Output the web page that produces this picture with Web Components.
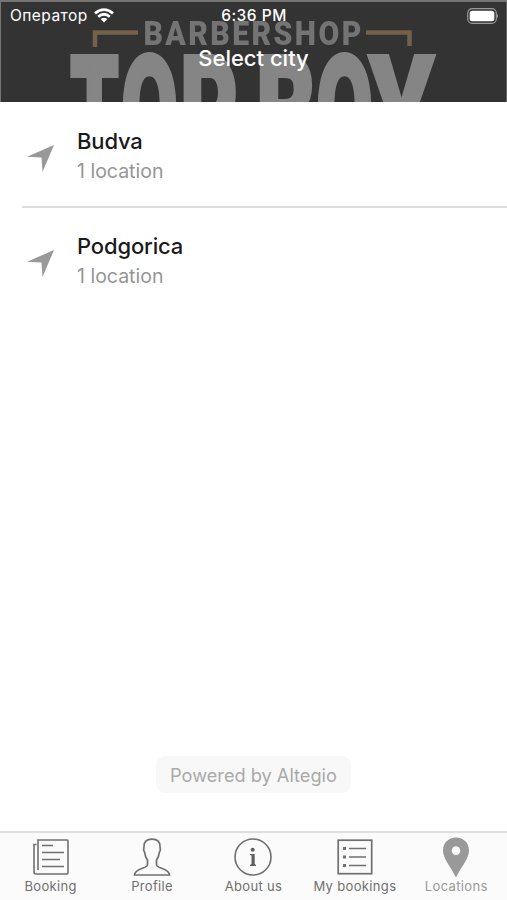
<!DOCTYPE html>
<html lang="en">
<head>
<meta charset="utf-8">
<title>Select city</title>
<style>
html,body{margin:0;height:100%;background:#fff}
body{font-family:Inter,"Liberation Sans",sans-serif}
</style>
</head>
<body>
<city-screen></city-screen>
<script>
const define = (name, html) => {
  const t = document.createElement('template');
  t.innerHTML = html;
  customElements.define(name, class extends HTMLElement {
    constructor() {
      super();
      this.attachShadow({mode: 'open'}).append(t.content.cloneNode(true));
    }
  });
};

define('brand-backdrop', `
<style>
:host{position:absolute;inset:0;overflow:hidden}
svg{display:block;filter:blur(.6px)}
</style>
<svg width="507" height="102" viewBox="0 0 507 102" font-family="Roboto,sans-serif">
  <g fill="none" stroke="#75604a" stroke-width="4.5">
    <path d="M95 47V32.500H138M366 32.500H409.500V46"/>
  </g>
  <text transform="translate(143.500 44.500) scale(.9 1)" font-size="33.500" font-weight="900" fill="#747474" textLength="242" lengthAdjust="spacing">BARBERSHOP</text>
  <g fill="#858585" stroke="#858585" stroke-width="4" stroke-linejoin="miter" font-size="150" font-weight="900">
    <text x="70" y="163" textLength="49" lengthAdjust="spacingAndGlyphs">T</text>
    <text x="121" y="163" textLength="57" lengthAdjust="spacingAndGlyphs">O</text>
    <text x="180" y="163" textLength="58" lengthAdjust="spacingAndGlyphs">P</text>
    <text x="256" y="163" textLength="60" lengthAdjust="spacingAndGlyphs">B</text>
    <text x="316" y="163" textLength="57" lengthAdjust="spacingAndGlyphs">O</text>
    <text x="369" y="163" textLength="65" lengthAdjust="spacingAndGlyphs">Y</text>
  </g>
</svg>`);

define('status-bar', `
<style>
:host{display:grid;grid-template-columns:1fr auto 1fr;align-items:center;height:30px;padding:0 9px 0 10px;color:#fff;font-size:15.500px;position:relative;letter-spacing:.45px;line-height:30px;box-sizing:border-box}
.left{display:flex;align-items:center;gap:6px}
.left span,.time{padding-top:1px}
.time{font-weight:500;letter-spacing:.5px}
.battery{justify-self:end;display:flex}
svg{display:block}
</style>
<div class="left"><span>Оператор</span>
<svg width="20" height="15" viewBox="0 0 20 15"><g fill="none" stroke="#fff" stroke-width="2.700"><path d="M1 5.400Q10-2.200 19 5.400M4.200 8.700Q10 3.800 15.800 8.700"/></g><path fill="#fff" d="M6.700 11Q10 8.300 13.300 11L10 14.500Z"/></svg></div>
<span class="time">6:36 PM</span>
<div class="battery"><svg width="33" height="16" viewBox="0 0 33 16"><rect x="2.700" y=".7" width="28.600" height="14.600" rx="4.500" fill="none" stroke="#999" stroke-width="1.200"/><rect x="4.700" y="2.700" width="24.600" height="10.600" rx="2.500" fill="#fff"/><path d="M32 5.500Q34 8 32 10.500Z" fill="#999"/></svg></div>`);

define('nav-header', `
<style>
:host{display:block;position:relative;height:102px;background:#333;box-shadow:inset 1px 2px 0 #747474,inset -1px 0 0 #666;flex:none}
h1{position:relative;margin:0;text-align:center;color:#fff;font-size:22px;font-weight:450;line-height:56px}
</style>
<brand-backdrop></brand-backdrop>
<status-bar></status-bar>
<h1><slot></slot></h1>`);

define('city-row', `
<style>
:host{display:flex;height:105px;box-sizing:border-box;padding:24px 0 0 27px;gap:23px}
svg{margin-top:19px;flex:none}
.name{font-size:22px;line-height:31px;color:#1b1b1b;font-weight:450;letter-spacing:-.15px}
.sub{font-size:19.500px;line-height:28px;color:#969696}
</style>
<svg width="27" height="27" viewBox="0 0 27 27"><path fill="#999" d="M27 0 15.500 27 14.500 12.500 0 11.800Z"/></svg>
<div><div class="name"><slot></slot></div><div class="sub"><slot name="sub"></slot></div></div>`);

define('powered-badge', `
<style>
:host{display:block;align-self:center;box-sizing:border-box;width:195px;height:37px;border-radius:9px;background:#f8f8f8;color:#a9a9a9;font-size:18.200px;line-height:38px;text-align:center;margin:auto 0 38px}
</style><slot></slot>`);

define('tab-item', `
<style>
:host{display:flex;flex-direction:column;align-items:center;color:#6f6f6f;font-size:13px;line-height:16px;letter-spacing:.35px;padding-top:3px;white-space:nowrap}
:host([active]){color:#999}
.icon{height:42px;display:flex;align-items:center}
</style>
<div class="icon"><slot name="icon"></slot></div><span><slot></slot></span>`);

define('tab-bar', `
<style>
:host{display:grid;grid-template-columns:repeat(5,1fr);height:69px;box-sizing:border-box;border-top:2px solid #dedede;background:#fbfbfb;flex:none}
svg{display:block}
</style>
<tab-item><svg slot="icon" width="36" height="36" viewBox="0 0 36 36" fill="none" stroke="#707070" stroke-width="1.600"><path d="M5 31V1H34Q35 1 35 2V33.500Q35 35 33 35H3Q1 35 1 33V5.500H3.500M9 6.500H20M9 13.500H31M9 20.500H27M9 27.500H31"/></svg>Booking</tab-item>
<tab-item><svg slot="icon" width="38" height="38" viewBox="0 0 38 38" fill="none" stroke="#707070" stroke-width="1.700"><path d="M19 1.200C13.500 1.200 11 4 11 8.500C10.200 11 10.700 13 11.800 15C12 18 13 20 14.500 22V27C14 31 2 29.500 1.500 37H36.500C36 29.500 24 31 23.500 27V22C25 20 26 18 26.200 15C27.300 13 27.800 11 27 8.500C27 4 24.500 1.200 19 1.200Z"/></svg>Profile</tab-item>
<tab-item><svg slot="icon" width="38" height="38" viewBox="0 0 38 38"><circle cx="19" cy="19" r="18" fill="none" stroke="#6f6f6f" stroke-width="1.600"/><circle cx="18.700" cy="11.700" r="2" fill="#606060"/><path fill="#606060" d="M16 16H20.700V26L22 27V28H16V27L17.500 26V17.500L16 17Z"/></svg>About us</tab-item>
<tab-item><svg slot="icon" width="36" height="36" viewBox="0 0 36 36" fill="none" stroke="#707070"><rect x="1.200" y="1.200" width="33.500" height="33.500" stroke-width="1.700"/><path stroke-width="1.600" d="M12 9.500H29M12 18H29M12 26.500H29"/><path stroke-width="2.800" d="M6 9.500H9M6 18H9M6 26.500H9"/></svg>My bookings</tab-item>
<tab-item active><svg slot="icon" width="28" height="41" viewBox="0 0 28 41"><path fill="#999" fill-rule="evenodd" d="M14 .5C6.300.500 1 6 1 13.500C1 22 9 30 14 40.500C19 30 27 22 27 13.500C27 6 21.700.500 14 .5ZM14 9.300A4.300 4.300 0 1 1 14 17.900A4.300 4.300 0 1 1 14 9.300Z"/></svg>Locations</tab-item>`);

define('city-screen', `
<style>
:host{display:flex;flex-direction:column;width:507px;height:900px;overflow:hidden;background:#fff}
.line{height:2px;margin:-1px 0 -1px 22px;background:#dcdcdc;flex:none}
city-row{flex:none}
</style>
<nav-header>Select city</nav-header>
<city-row>Budva<span slot="sub">1 location</span></city-row>
<div class="line"></div>
<city-row>Podgorica<span slot="sub">1 location</span></city-row>
<powered-badge>Powered by Altegio</powered-badge>
<tab-bar></tab-bar>`);
</script>
</body>
</html>
